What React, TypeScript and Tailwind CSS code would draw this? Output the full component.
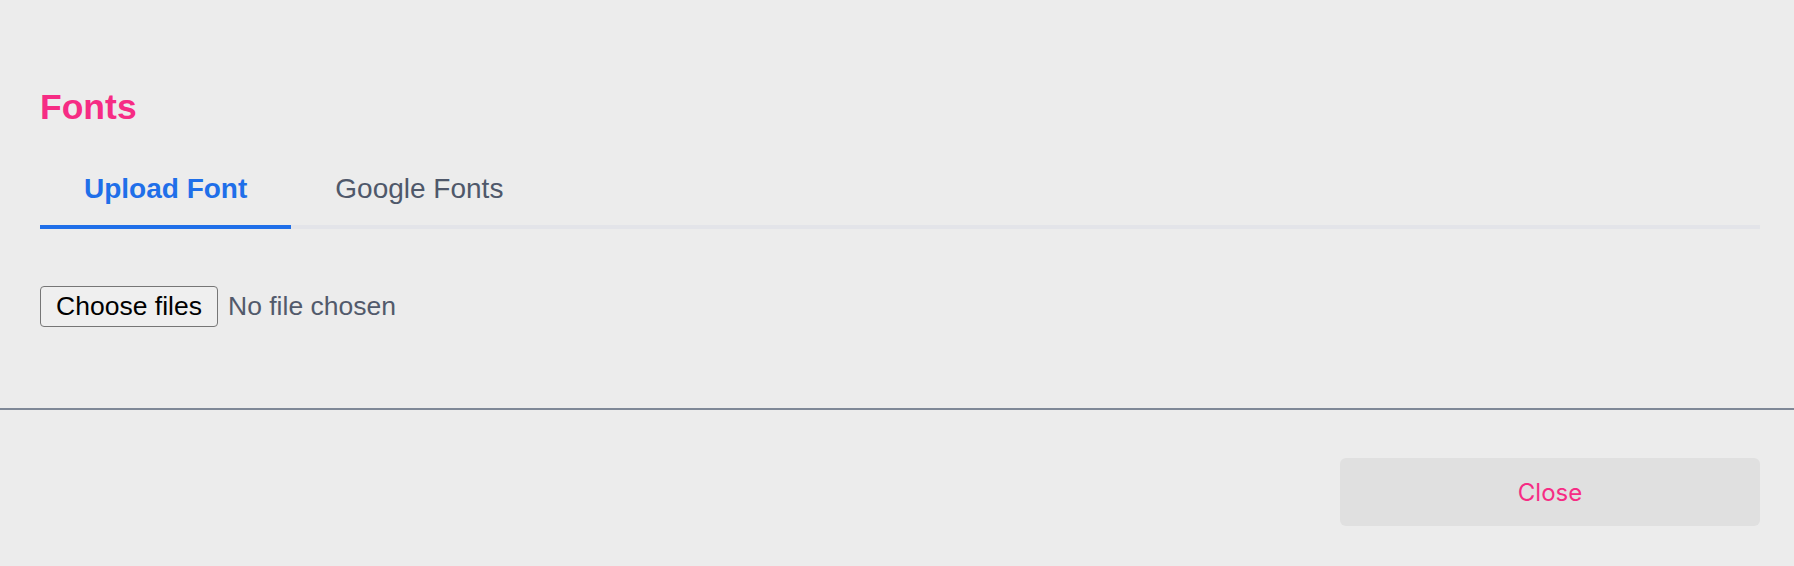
import { useState } from "react";

const tabs = ["Upload Font", "Google Fonts"];

function FilePicker() {
  return (
    <div className="flex items-center">
      <button
        type="button"
        className="flex h-[41px] w-[178px] items-center justify-center rounded-[4px] border border-[#767676] bg-[#efefef] text-[26.5px] leading-none text-black"
      >
        Choose files
      </button>
      <span className="ml-[10px] text-[26.5px] leading-none text-[#525a6b]">
        No file chosen
      </span>
    </div>
  );
}

export default function App() {
  const [active, setActive] = useState(0);

  return (
    <div className="flex h-[566px] w-full flex-col bg-[#ececec] font-['Liberation_Sans',Arial,sans-serif]">
      <div className="pl-10 pr-[34px] pt-[90px]">
        <h2 className="text-[35.5px] font-bold leading-[34px] text-[#f62c84]">Fonts</h2>

        <div className="mt-[51px] flex border-b-4 border-[#e3e4e9]">
          {tabs.map((tab, i) => (
            <button
              key={tab}
              type="button"
              onClick={() => setActive(i)}
              className={
                i === active
                  ? "-mb-1 border-b-4 border-[#1f6fe9] px-[44px] pb-[22px] text-[28px] font-bold leading-[28px] text-[#1f6fe9]"
                  : "-mb-1 border-b-4 border-transparent px-[44px] pb-[22px] text-[28px] leading-[28px] text-[#4f586a]"
              }
            >
              {tab}
            </button>
          ))}
        </div>

        <div className="mt-[57px]">
          <FilePicker />
        </div>
      </div>

      <div className="mt-[81px] h-[2px] w-full bg-[#7f8897]" />

      <div className="flex justify-end pl-10 pr-[34px] pt-[48px]">
        <button
          type="button"
          className="flex h-[68px] w-[420px] items-center justify-center rounded-md bg-[#e0e0e0] pt-[2px] font-['Inter',sans-serif] text-[24px] text-[#f62c84]"
        >
          Close
        </button>
      </div>
    </div>
  );
}
